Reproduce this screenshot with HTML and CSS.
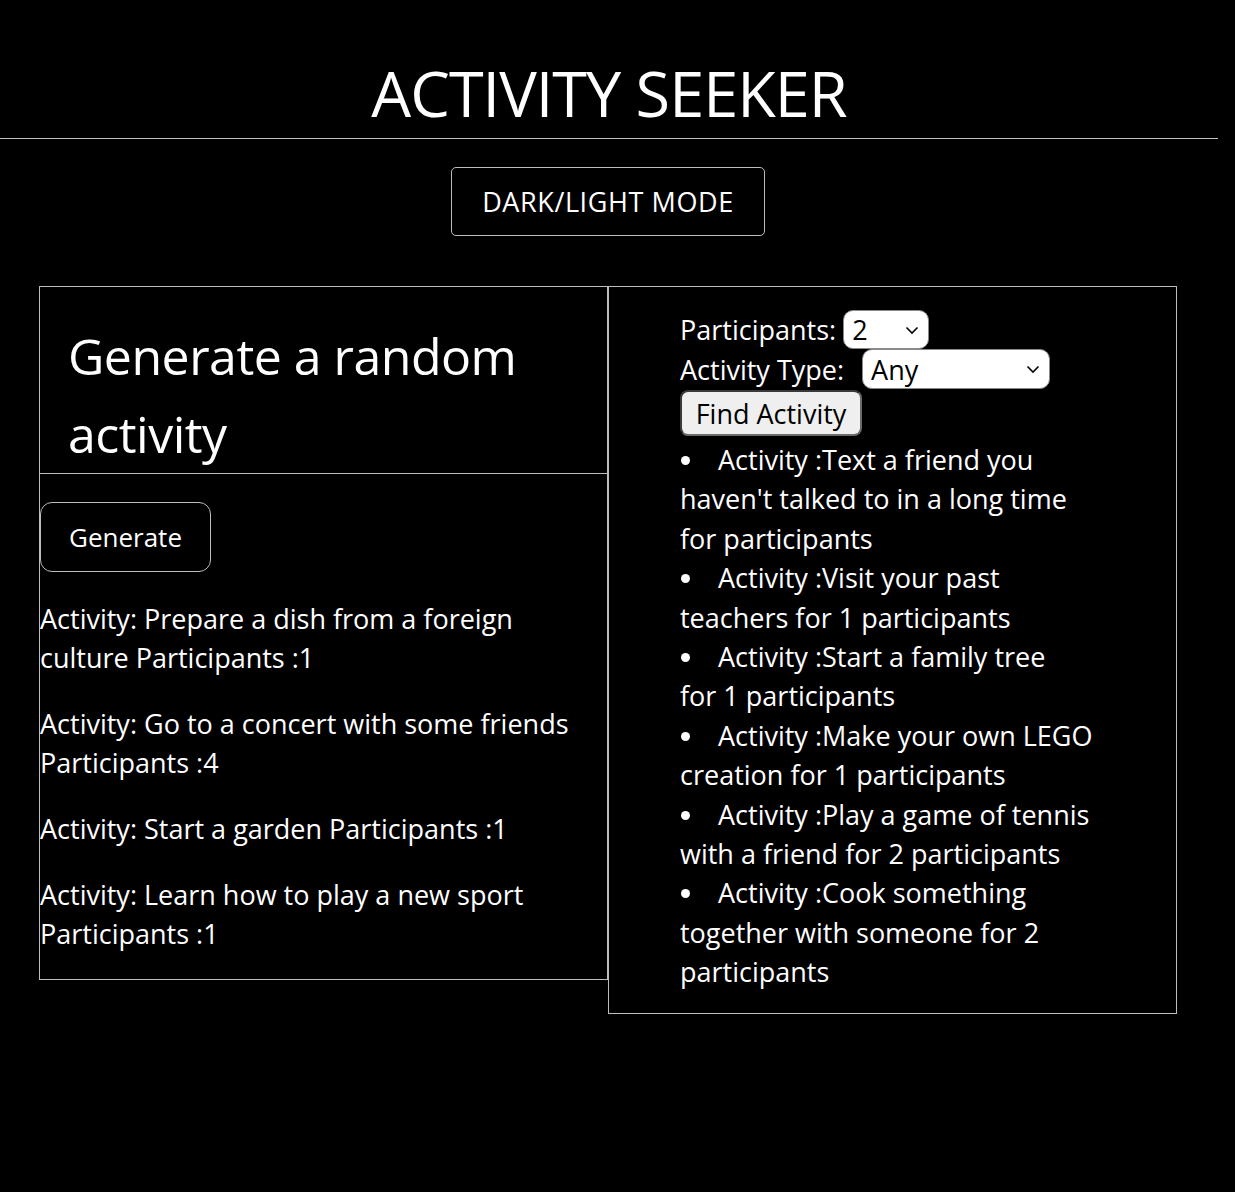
FILE: index.html
```html
<!DOCTYPE html>
<html lang="en">
<head>
<meta charset="utf-8">
<title>Activity Seeker</title>
<link rel="stylesheet" href="styles.css">
</head>
<body>
<div class="page">
  <header class="site-header">
    <h1 class="title">ACTIVITY SEEKER</h1>
  </header>
  <hr class="rule">
  <div class="mode-row">
    <button class="mode-btn" type="button">DARK/LIGHT MODE</button>
  </div>
  <main class="panels">
    <section class="panel panel-left">
      <div class="panel-head">
        <h2 class="panel-title">Generate a random activity</h2>
      </div>
      <button class="gen-btn" type="button">Generate</button>
      <p class="result">Activity: Prepare a dish from a foreign culture Participants :1</p>
      <p class="result">Activity: Go to a concert with some friends Participants :4</p>
      <p class="result">Activity: Start a garden Participants :1</p>
      <p class="result">Activity: Learn how to play a new sport Participants :1</p>
    </section>
    <section class="panel panel-right">
      <form class="finder">
        <div class="field">
          <label class="field-label" for="participants">Participants:</label>
          <span class="sel-wrap">
            <select class="sel sel-small" id="participants">
              <option>1</option>
              <option selected>2</option>
              <option>3</option>
              <option>4</option>
            </select>
            <svg class="chev" width="14" height="9" viewBox="0 0 14 9" aria-hidden="true"><path d="M1.5 1.5 L7 7 L12.5 1.5" fill="none" stroke="#000" stroke-width="1.6"/></svg>
          </span>
        </div>
        <div class="field">
          <label class="field-label field-label-type" for="type">Activity Type:</label>
          <span class="sel-wrap">
            <select class="sel sel-wide" id="type">
              <option selected>Any</option>
              <option>Education</option>
              <option>Recreational</option>
              <option>Social</option>
            </select>
            <svg class="chev" width="14" height="9" viewBox="0 0 14 9" aria-hidden="true"><path d="M1.5 1.5 L7 7 L12.5 1.5" fill="none" stroke="#000" stroke-width="1.6"/></svg>
          </span>
        </div>
        <div class="field">
          <button class="find-btn" type="button">Find Activity</button>
        </div>
      </form>
      <ul class="found">
        <li>Activity :Text a friend you haven't talked to in a long time for participants</li>
        <li>Activity :Visit your past teachers for&nbsp;1 participants</li>
        <li>Activity :Start a family tree for&nbsp;1 participants</li>
        <li>Activity :Make your own LEGO creation for&nbsp;1 participants</li>
        <li>Activity :Play a game of tennis with a friend for&nbsp;2 participants</li>
        <li>Activity :Cook something together with someone for&nbsp;2 participants</li>
      </ul>
    </section>
  </main>
</div>
</body>
</html>
```
FILE: styles.css
```css
html, body {
  margin: 0;
  padding: 0;
  background: #000;
  color: #fff;
}

body {
  font-family: "Open Sans", "DejaVu Sans", sans-serif;
  font-size: 27px;
}

.page {
  width: 1218px;
  min-height: 1192px;
}

.site-header {
  text-align: center;
  padding-top: 56px;
  padding-bottom: 8px;
}

.title {
  margin: 0;
  font-family: "Open Sans", sans-serif;
  font-weight: 400;
  font-size: 63px;
  line-height: 74px;
  letter-spacing: -1px;
}

.rule {
  margin: 0;
  border: 0;
  border-top: 1px solid #bdbdbd;
  height: 0;
}

.mode-row {
  display: flex;
  justify-content: center;
  padding-top: 28px;
  padding-right: 2px;
}

.mode-btn {
  width: 314px;
  height: 69px;
  background: #000;
  color: #fff;
  border: 1px solid #bdbdbd;
  border-radius: 5px;
  font-family: "Open Sans", sans-serif;
  font-size: 27px;
  letter-spacing: 0.6px;
  padding: 0;
  cursor: pointer;
}

.panels {
  display: flex;
  align-items: flex-start;
  padding-left: 39px;
  margin-top: 50px;
}

.panel {
  box-sizing: border-box;
  width: 569px;
  border: 1px solid #bdbdbd;
}

.panel-head {
  border-bottom: 1px solid #bdbdbd;
  padding: 31px 28px 0;
}

.panel-title {
  margin: 0;
  font-family: "Open Sans", sans-serif;
  font-weight: 400;
  font-size: 50px;
  line-height: 77.5px;
  letter-spacing: -0.5px;
}

.gen-btn {
  display: block;
  margin-top: 28px;
  width: 171px;
  height: 70px;
  background: #000;
  color: #fff;
  border: 1px solid #bdbdbd;
  border-radius: 12px;
  font-family: "Open Sans", sans-serif;
  font-size: 26px;
  padding: 0;
}

.result {
  margin: 27px 0 26px;
  line-height: 39px;
}

.panel-right {
  padding: 23px 80px 21px 71px;
}

.finder {
  margin: 0;
}

.field {
  display: flex;
  align-items: center;
}

.field-label {
  line-height: 39px;
  margin-right: 7px;
}

.field-label-type {
  margin-right: 18px;
}

.sel-wrap {
  position: relative;
  display: inline-flex;
}

.sel {
  -webkit-appearance: none;
  appearance: none;
  font-family: "Open Sans", sans-serif;
  font-size: 27px;
  background: #fff;
  color: #000;
  border: 1px solid #8a8a8a;
  border-radius: 10px;
  padding: 0 0 0 8px;
  margin: 0;
  line-height: 37px;
}

.sel-small {
  width: 86px;
  height: 39px;
}

.sel-wide {
  width: 188px;
  height: 40px;
}

.chev {
  position: absolute;
  right: 10px;
  top: 50%;
  margin-top: -4px;
  pointer-events: none;
}

.find-btn {
  margin-top: 1px;
  width: 182px;
  height: 46px;
  background: #efefef;
  color: #000;
  border: 2px solid #6a6a6a;
  border-top-color: #3a3a3a;
  border-left-color: #3a3a3a;
  border-radius: 8px;
  font-family: "Open Sans", sans-serif;
  font-size: 27px;
  padding: 0;
}

.found {
  list-style: none;
  margin: 4px 0 0;
  padding: 0;
}

.found li {
  line-height: 39.4px;
}

.found li::before {
  content: "";
  display: inline-block;
  width: 9px;
  height: 9px;
  border-radius: 50%;
  background: #fff;
  margin-left: 1px;
  margin-right: 28px;
  vertical-align: 5px;
}
```
